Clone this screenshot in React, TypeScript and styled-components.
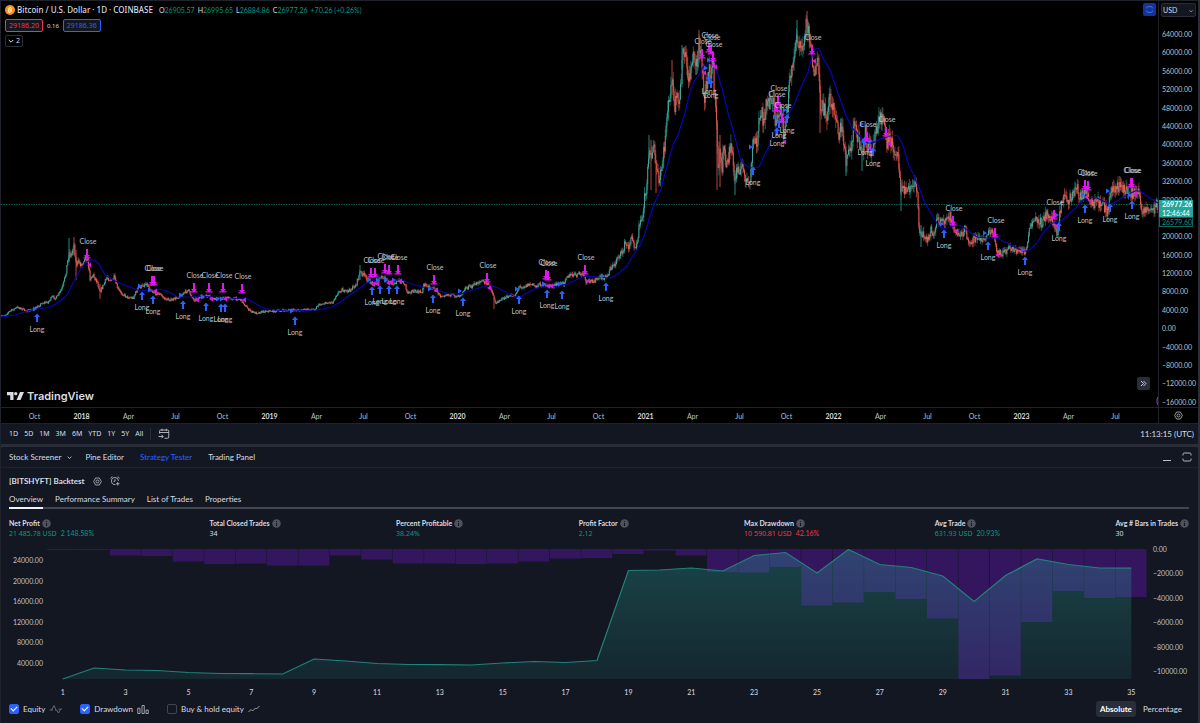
import React from "react";
import styled, { createGlobalStyle, css } from "styled-components";

const c = {
  page: "#131722",
  chart: "#000000",
  line: "#1e222d",
  divider: "#2a2e39",
  text: "#d9dce3",
  axis: "#bdc0c9",
  muted: "#787b86",
  up: "#089981",
  upSoft: "#26a69a",
  down: "#f23645",
  blue: "#2962ff",
  magenta: "#e015f0",
};
const wide = `"Noto Sans", sans-serif`;

const GlobalStyle = createGlobalStyle`
  * { box-sizing: border-box; }
  body { margin: 0; background: ${c.divider}; color: ${c.text}; font: 8px/10px Lato, "Open Sans", sans-serif; }
  button, select, input { font: inherit; color: inherit; margin: 0; }
  button { background: none; border: 0; padding: 0; cursor: pointer; }
  svg { display: block; }
`;

const Page = styled.div`
  min-height: 100vh;
  display: flex;
  flex-direction: column;
  padding-right: 2px;
  border-left: 1px solid ${c.line};
`;

/* ---------- price chart ---------- */

const ChartPanel = styled.section`
  background: ${c.chart};
  border-top: 1px solid ${c.line};
`;
const ChartRow = styled.div`
  display: flex;
  border-bottom: 1px solid ${c.line};
`;
const Plot = styled.div`
  position: relative;
  flex: 1;
  min-width: 0;
  & > svg { width: 100%; height: auto; }
`;
const Legend = styled.div`
  position: absolute;
  top: 2px;
  left: 4px;
  display: flex;
  flex-direction: column;
  align-items: flex-start;
  gap: 3px;
  font-family: ${wide};
  font-size: 7px;
`;
const LegendRow = styled.div<{ $gap: number }>`
  display: flex;
  align-items: center;
  gap: ${(p) => p.$gap}px;
  height: 13px;
`;
const Title = styled.div`
  display: flex;
  align-items: center;
  gap: 2px;
  margin-right: 3px;
`;
const Symbol = styled.h1`
  margin: 0;
  font-size: 8px;
  line-height: 12px;
  font-weight: 500;
  white-space: nowrap;
`;
const Ohlc = styled.span`
  font: 7px/10px Lato, "Open Sans", sans-serif;
  white-space: nowrap;
  color: ${c.text};
  b { font-weight: 400; color: ${c.up}; }
`;
const Quote = styled.button<{ $tone: string }>`
  height: 13px;
  padding: 0 3px;
  border: 1px solid ${(p) => p.$tone};
  border-radius: 2px;
  background: ${c.page};
  color: ${(p) => p.$tone};
  line-height: 11px;
`;
const Spread = styled.span`
  font-size: 6px;
`;
const Collapse = styled.button`
  display: flex;
  align-items: center;
  gap: 2px;
  height: 12px;
  padding: 0 2px;
  border: 1px solid ${c.divider};
  border-radius: 2px;
`;
const SnapButton = styled.button`
  position: absolute;
  top: 2px;
  right: 2px;
  width: 13px;
  height: 13px;
  display: grid;
  place-items: center;
  border-radius: 2px;
  background: #12349c;
  color: #6f8ce8;
`;
const JumpButton = styled.button`
  position: absolute;
  right: 8px;
  bottom: 17px;
  width: 13px;
  height: 13px;
  display: grid;
  place-items: center;
  border-radius: 2px;
  background: ${c.divider};
`;
const Brand = styled.a`
  position: absolute;
  left: 6px;
  bottom: 4px;
  display: flex;
  align-items: center;
  gap: 3px;
  color: ${c.text};
  font: 600 11px/14px Inter, sans-serif;
  text-decoration: none;
`;
const PriceAxis = styled.div`
  position: relative;
  width: 40px;
  border-left: 1px solid ${c.line};
  padding: 28px 0 0 3px;
  display: flex;
  flex-direction: column;
  justify-content: space-between;
  color: ${c.axis};
  font-size: 7px;
`;
const Currency = styled.select`
  position: absolute;
  top: 2px;
  left: 2px;
  width: 35px;
  height: 14px;
  padding: 0 1px;
  appearance: none;
  border: 1px solid ${c.divider};
  border-radius: 2px;
  background: ${c.page};
  color: ${c.text};
`;
const CurrencyArrow = styled.svg`
  position: absolute;
  top: 8px;
  right: 5px;
  pointer-events: none;
`;
const LastPrice = styled.div`
  position: absolute;
  top: 199px;
  left: 0;
  width: 34px;
  padding-left: 3px;
  background: ${c.upSoft};
  color: #fff;
  line-height: 8px;
  b { display: block; line-height: 9px; }
`;
const AskPrice = styled.div`
  position: absolute;
  top: 216px;
  left: 0;
  width: 34px;
  padding-left: 2px;
  border: 1px solid #12665c;
  background: ${c.chart};
  color: ${c.up};
  line-height: 8px;
`;
const TimeRow = styled.div`
  display: flex;
  height: 15px;
  align-items: stretch;
`;
const TimeAxis = styled.div`
  flex: 1;
  display: grid;
  grid-template-columns: repeat(24, 1fr);
  align-items: center;
  padding: 0 19px 0 10px;
  text-align: center;
  font-size: 7px;
  color: ${c.axis};
`;
const Tick = styled.span<{ $year?: boolean }>`
  ${(p) => p.$year && css`font-weight: 700; color: ${c.text};`}
`;
const AxisSettings = styled.button`
  width: 40px;
  display: grid;
  place-items: center;
  border-left: 1px solid ${c.line};
  color: ${c.axis};
`;

/* ---------- range bar ---------- */

const RangeBar = styled.nav`
  display: flex;
  align-items: center;
  height: 21px;
  padding: 0 4px 0 8px;
  background: ${c.page};
  border-top: 1px solid ${c.line};
`;
const Ranges = styled.div`
  display: flex;
  gap: 6px;
  padding-right: 7px;
  margin-right: 7px;
  border-right: 1px solid ${c.divider};
  font-family: ${wide};
  font-size: 7px;
  line-height: 12px;
`;
const Clock = styled.button`
  margin-left: auto;
`;

/* ---------- strategy tester ---------- */

const Tester = styled.section`
  flex: 1;
  margin-top: 3px;
  background: ${c.page};
  border-radius: 2px 2px 0 0;
`;
const PanelTabs = styled.div`
  display: flex;
  align-items: center;
  height: 21px;
  padding: 0 6px 0 8px;
  border-bottom: 1px solid ${c.line};
`;
const PanelTab = styled.button<{ $active?: boolean; $gap: number }>`
  display: flex;
  align-items: center;
  gap: 6px;
  margin-right: ${(p) => p.$gap}px;
  color: ${(p) => (p.$active ? c.blue : c.text)};
`;
const WindowButtons = styled.div`
  display: flex;
  gap: 10px;
  margin-left: auto;
  color: ${c.axis};
`;
const StrategyRow = styled.div`
  display: flex;
  align-items: center;
  gap: 8px;
  height: 24px;
  padding: 2px 8px 0;
  color: ${c.axis};
`;
const StrategyName = styled.h2`
  margin: 0;
  font-size: 8px;
  font-weight: 700;
  color: ${c.text};
`;
const ReportTabs = styled.div`
  display: flex;
  gap: 12px;
  height: 17px;
  margin: 0 9px 0 8px;
  border-bottom: 2px solid #434651;
`;
const ReportTab = styled.button<{ $active?: boolean }>`
  height: 17px;
  padding-bottom: 2px;
  border-bottom: 2px solid ${(p) => (p.$active ? "#f0f3fa" : "transparent")};
`;
const Metrics = styled.dl`
  display: flex;
  justify-content: space-between;
  margin: 0;
  padding: 9px 9px 10px 8px;
`;
const MetricName = styled.dt`
  display: flex;
  align-items: center;
  gap: 2px;
  font-size: 7px;
  font-weight: 700;
`;
const MetricValue = styled.dd<{ $tone?: string }>`
  margin: 0;
  font: 7px/11px ${wide};
  color: ${(p) => p.$tone ?? c.text};
  small { font: 7px/11px Lato, sans-serif; margin-left: 4px; }
`;
const Report = styled.div`
  display: flex;
  font-size: 7px;
  color: ${c.axis};
`;
const EquityAxis = styled.div`
  width: 46px;
  padding: 6px 4px 12px 0;
  display: flex;
  flex-direction: column;
  justify-content: space-between;
  text-align: right;
`;
const ReportPlot = styled.div`
  flex: 1;
  min-width: 0;
  & > svg { width: 100%; height: auto; }
`;
const DrawdownAxis = styled.div`
  width: 51px;
  margin: -5px 0 4px;
  padding-left: 6px;
  display: flex;
  flex-direction: column;
  justify-content: space-between;
`;
const TradeAxis = styled.div`
  display: grid;
  grid-template-columns: repeat(35, 1fr);
  padding: 7px 51px 0 46px;
  text-align: center;
  font-size: 7px;
`;
const Footer = styled.div`
  display: flex;
  align-items: center;
  height: 24px;
  padding: 0 12px 0 8px;
`;
const Toggle = styled.label`
  display: flex;
  align-items: center;
  gap: 4px;
  margin-right: 18px;
  color: ${c.text};
`;
const Box = styled.input`
  appearance: none;
  width: 10px;
  height: 10px;
  border: 1px solid #434651;
  border-radius: 2px;
  display: grid;
  place-items: center;
  &:checked { background: ${c.blue}; border-color: ${c.blue}; }
  &:checked::after {
    content: "";
    width: 5px;
    height: 3px;
    border-left: 1px solid #fff;
    border-bottom: 1px solid #fff;
    transform: translateY(-1px) rotate(-45deg);
  }
`;
const Units = styled.div`
  display: flex;
  gap: 3px;
  margin-left: auto;
`;
const Unit = styled.button<{ $active?: boolean }>`
  height: 16px;
  padding: 0 4px;
  border-radius: 3px;
  ${(p) => p.$active && css`background: ${c.divider}; color: #fff; font-weight: 700;`}
`;

/* ---------- data ---------- */

type P = [number, number];
const pts = (s: string): P[] => s.trim().split(/\s+/).map((t) => t.split(",").map(Number) as P);

const PRICE = pts(`
0,317 5,315 10,311 18,307 22,309 27,311 31,310 36,308 42,303 48,302 52,297 56,298 60,292 63,286 66,272 69,252 71,256 74,244
76,264 79,262 82,265 85,255 88,262 90,278 93,275 97,281 100,291 104,284 107,277 112,281 114,277 117,287 120,292 127,297 133,298
138,288 142,286 146,283 151,290 155,293 160,294 165,299 172,300 180,296 188,290 194,300 200,297 208,296 212,299 225,298 240,299
245,305 250,311 256,313 265,311 275,311 292,310 300,310 315,309 318,305 325,303 333,302 336,295 342,289 345,292 350,290 356,285
360,272 363,274 368,280 372,283 376,284 381,277 385,279 390,283 396,282 402,281 405,284 407,292 412,291 418,292 422,292 424,284
430,287 436,290 440,296 447,294 455,296 460,295 465,288 472,286 478,282 482,281 486,283 491,288 494,298 496,304 499,300 504,298
510,296 515,295 519,287 525,286 530,284 536,286 542,284 545,286 552,286 560,284 564,283 566,276 573,275 580,274 583,274 586,282
595,280 600,278 605,277 607,277 610,268 615,265 617,257 622,253 625,243 628,248 631,238 635,246 638,238 639,220 642,222 644,200
647,187 649,143 652,157 654,147 657,173 659,183 662,167 665,143 667,110 670,103 672,72 674,108 677,100 679,107 682,67 683,50
685,57 687,67 689,83 692,60 694,55 697,63 699,43 701,60 703,77 704,103 707,80 709,63 711,73 713,60 715,103 717,133 718,167
720,153 722,167 724,150 727,167 729,153 731,143 733,163 735,182 737,167 739,167 742,170 745,173 747,182 750,188 752,153 754,137
757,150 759,120 762,113 763,120 766,103 769,107 772,97 774,97 775,123 778,123 780,113 783,123 784,133 786,123 788,103 790,77
793,67 795,43 797,33 799,50 802,47 804,43 806,27 807,20 809,33 811,47 813,67 816,73 818,63 820,103 823,110 827,113 830,95
833,110 835,108 838,132 842,130 844,140 846,163 848,155 851,150 853,133 855,123 857,133 860,147 863,157 865,133 868,147 871,150
873,140 877,127 879,112 882,117 885,133 887,143 890,137 893,147 897,151 899,167 901,193 903,187 907,192 910,185 913,187 917,187
918,203 919,227 922,237 924,233 928,240 931,230 933,235 937,220 941,222 944,223 947,218 950,215 953,225 955,232 960,237 963,233
965,227 967,240 972,240 977,238 983,240 988,233 993,232 995,243 997,253 1003,253 1007,250 1013,248 1018,252 1025,251 1027,247
1029,233 1032,223 1037,220 1042,223 1044,217 1047,215 1051,217 1053,223 1057,233 1059,217 1062,200 1065,198 1068,200 1072,197
1075,188 1078,190 1080,198 1083,193 1086,193 1089,203 1093,206 1098,202 1103,205 1107,212 1109,205 1111,188 1115,190 1118,187
1122,185 1123,190 1128,192 1133,193 1138,192 1140,202 1141,208 1146,209 1153,210 1156,205 1158,204`);

const AVERAGE = pts(`
0,317 15,315 27,311 37,309 45,308 52,306 60,301 67,295 73,283 80,270 85,263 90,260 94,260 99,264 105,275 113,280 122,284 130,287
140,291 150,290 158,289 167,291 178,297 190,297 200,296 212,297 228,299 245,298 253,302 263,308 273,310 290,311 317,310 332,307
340,302 350,295 360,288 370,281 378,279 388,280 402,280 412,284 422,287 430,288 440,291 450,294 461,294 470,291 482,287 490,285
498,288 507,293 516,297 522,296 530,291 540,287 553,287 567,284 578,279 586,276 597,277 610,278 618,274 627,266 632,257 640,245
645,233 650,216 655,202 661,189 666,170 673,145 678,135 685,113 690,92 695,80 700,73 703,67 709,63 714,65 717,72 722,88 728,113
733,130 740,157 744,164 750,168 759,167 763,158 768,148 774,132 780,120 785,115 790,112 795,103 799,92 803,83 808,72 813,53
816,49 819,48 824,60 830,70 837,90 845,113 852,128 858,134 863,140 868,143 873,143 880,139 887,137 893,135 898,136 903,145
908,163 915,178 920,190 925,203 932,215 938,225 943,229 950,227 957,225 963,227 970,232 977,237 987,238 997,238 1007,243
1017,248 1023,251 1028,251 1037,243 1043,233 1052,223 1060,222 1070,213 1077,207 1083,200 1090,197 1097,198 1105,202 1112,204
1120,199 1127,195 1135,191 1140,191 1150,198 1158,203`);

const SPIKES: [number, number, number, boolean][] = [
  [69, 238, 262, true], [74, 237, 255, false], [76, 250, 280, false], [100, 284, 299, false], [360, 265, 280, true], [494, 298, 309, false],
  [649, 135, 160, true], [651, 140, 190, false], [656, 160, 193, false], [672, 60, 95, false], [682, 45, 70, true], [699, 30, 60, false],
  [717, 120, 190, false], [720, 135, 187, false], [735, 170, 195, true], [797, 20, 40, true], [807, 11, 30, false], [820, 80, 133, false],
  [846, 150, 176, true], [862, 145, 171, true], [901, 180, 211, true], [921, 225, 247, true], [1057, 225, 237, true],
];

const LONGS = pts(`37,318 142,296 153,300 183,305 206,307 221,308 225,308 295,321 372,291 380,290 389,290 397,290 433,299 463,302 519,300
547,294 562,295 606,287 709,80 711,84 753,171 777,132 779,124 787,119 865,141 873,152 944,234 988,246 1025,261 1059,227 1085,209 1110,208 1132,205`);
const CLOSES = pts(`87,254 152,281 154,281 194,288 209,288 223,288 242,289 371,273 375,273 385,269 389,270 398,270 434,280 487,278 546,275 548,276
585,270 702,54 709,48 711,50 713,57 778,101 776,107 782,118 812,50 867,137 886,132 953,221 995,233 1054,215 1085,185 1088,186 1131,183 1132,183`);
const ENTRIES = pts(`35,309 140,286 150,290 181,295 203,297 218,299 222,299 292,311 369,280 378,280 386,280 394,280 430,289 460,291 517,289 544,284
560,284 603,276 706,68 709,60 751,147 775,117 785,110 862,124 864,141 871,141 942,224 985,233 1023,250 1057,215 1083,195 1108,191 1130,195`);
const EXITS = pts(`89,265 155,291 197,300 211,299 225,299 244,300 373,284 377,284 388,283 391,282 400,281 436,290 489,288 548,286 551,286 588,281
704,73 713,65 715,67 776,110 780,111 784,142 814,61 869,148 889,144 956,231 997,255 1056,226 1086,197 1090,201 1135,194`);

const at = (series: P[], x: number) => {
  let i = 1;
  while (i < series.length - 1 && series[i][0] < x) i++;
  const [x0, y0] = series[i - 1];
  const [x1, y1] = series[i];
  return y0 + ((y1 - y0) * (x - x0)) / (x1 - x0);
};

const buildCandles = () => {
  let seed = 7;
  const rnd = () => (seed = (seed * 16807) % 2147483647) / 2147483647;
  const out = { upWick: "", downWick: "", upBody: "", downBody: "" };
  let open = 317;
  for (let x = 0.5; x < 1158; x += 0.8) {
    const base = at(PRICE, x);
    const amp = Math.min(10, Math.max(1.2, (328 - base) * 0.05));
    const close = base + (rnd() - 0.5) * amp * 1.7;
    const hi = Math.min(open, close) - rnd() * amp;
    const lo = Math.max(open, close) + rnd() * amp;
    const up = close < open;
    const wick = `M${x.toFixed(1)} ${hi.toFixed(1)}V${lo.toFixed(1)}`;
    const body = `M${x.toFixed(1)} ${Math.min(open, close).toFixed(1)}V${(Math.max(open, close) + 0.5).toFixed(1)}`;
    if (up) { out.upWick += wick; out.upBody += body; } else { out.downWick += wick; out.downBody += body; }
    open = close;
  }
  return out;
};
const CANDLES = buildCandles();

const PRICE_TICKS = Array.from({ length: 21 }, (_, i) => 64000 - i * 4000);
const QUARTERS = ["Apr", "Jul", "Oct"];
const TIME_TICKS = ["Oct", ...[2018, 2019, 2020, 2021, 2022].flatMap((y) => [String(y), ...QUARTERS]), "2023", "Apr", "Jul"];
const RANGES = ["1D", "5D", "1M", "3M", "6M", "YTD", "1Y", "5Y", "All"];
const METRICS = [
  { name: "Net Profit", value: "21 485.78 USD", pct: "2 148.58%", tone: c.up },
  { name: "Total Closed Trades", value: "34" },
  { name: "Percent Profitable", value: "38.24%", tone: c.up },
  { name: "Profit Factor", value: "2.12", tone: c.up },
  { name: "Max Drawdown", value: "10 590.81 USD", pct: "42.16%", tone: c.down },
  { name: "Avg Trade", value: "631.93 USD", pct: "20.93%", tone: c.up },
  { name: "Avg # Bars in Trades", value: "30" },
];
const EQUITY = [130, 119, 121, 121.5, 123.5, 124.5, 124.7, 125, 110, 112, 114.5, 115.5, 115.7, 116, 114, 112.5, 113.5, 111.5, 21.5, 21,
  19, 22, 6.5, 3.5, 24, 0.5, 15.5, 18.5, 27, 52.5, 26.5, 10, 15.5, 19, 19.2];
const DRAWDOWN = [1, 1, 6.5, 7, 12.5, 15, 14.7, 16.5, 16.5, 6.5, 10.5, 14.5, 14.5, 15, 14.5, 12.5, 9.5, 9, 5, 1.5, 6.5, 23, 23.5, 18,
  56.5, 53.5, 43, 50, 69.5, 130, 126.5, 73, 42, 49, 48];
const STEP = 1100 / 35;

const num = (n: number) => `${n < 0 ? "−" : ""}${Math.abs(n)}.00`;
const linePath = (p: P[]) => p.map(([x, y], i) => `${i ? "L" : "M"}${x} ${y}`).join("");

/* ---------- icons ---------- */

const Chevron = ({ size = 5 }: { size?: number }) => (
  <svg width={size} height={size} viewBox="0 0 6 6" fill="none" stroke="currentColor"><path d="M.8 2 3 4.2 5.2 2" /></svg>
);
const Hexagon = ({ size = 9 }: { size?: number }) => (
  <svg width={size} height={size} viewBox="0 0 18 18" fill="none" stroke="currentColor" strokeWidth="1.6">
    <path d="M5.2 2h7.6l3.9 7-3.9 7H5.2L1.3 9z" /><circle cx="9" cy="9" r="3" />
  </svg>
);
const Alarm = () => (
  <svg width="10" height="10" viewBox="0 0 20 20" fill="none" stroke="currentColor" strokeWidth="1.7">
    <path d="M17 10A7 7 0 1 0 11 17M1.500 5Q2 2 5 1.500M15 1.500Q18 2 18.500 5M10 6.500V10.500H7M15.500 12v7M12 15.500h7" />
  </svg>
);
const Frame = ({ size = 10 }: { size?: number }) => (
  <svg width={size} height={size} viewBox="0 0 20 20" fill="none" stroke="currentColor" strokeWidth="1.9">
    <path d="M2 7V4.500Q2 2 4.500 2H15.500Q18 2 18 4.500V7M2 13v2.500Q2 18 4.500 18H15.500Q18 18 18 15.500V13" />
  </svg>
);
const Info = () => (
  <svg width="9" height="9" viewBox="0 0 18 18"><circle cx="9" cy="9" r="8.500" fill="#50535e" /><path d="M9 4v2.200M9 8v6" stroke={c.page} strokeWidth="2.200" /></svg>
);
const GoTo = () => (
  <svg width="12" height="12" viewBox="0 0 24 24" fill="none" stroke={c.axis} strokeWidth="1.800">
    <path d="M3 11V6.500Q3 4 5.500 4H19Q21.500 4 21.500 6.500V18Q21.500 20.500 19 20.500H13M3 9H21.500M8 1.500V6M16.500 1.500V6M1 17H10M7 13.500 10.500 17 7 20.500" />
  </svg>
);

const ArrowMark = ({ x, y, up }: { x: number; y: number; up?: boolean }) =>
  up ? (
    <path d={`M${x - 1} ${y + 4}V${y - 1}H${x - 3}L${x} ${y - 4.500}L${x + 3} ${y - 1}H${x + 1}V${y + 4}z`} fill={c.blue} />
  ) : (
    <path d={`M${x - 1} ${y - 5}V${y + 1}H${x - 3}L${x - 1} ${y + 3.200}H${x - 3.500}V${y + 4.500}H${x + 3.500}V${y + 3.200}H${x + 1}L${x + 3} ${y + 1}H${x + 1}V${y - 5}z`} fill={c.magenta} />
  );

const PriceChart = () => (
  <svg viewBox="0 0 1157 406" role="img" aria-label="Bitcoin price with strategy entries and exits">
    <path d="M0 203.500H1157" stroke="#0f5a50" strokeDasharray="1.500 1" />
    <g transform="translate(-1 -1)" fill="none">
      <g strokeWidth="0.700">
        <path d={CANDLES.upWick} stroke="#1c8a80" />
        <path d={CANDLES.downWick} stroke="#c24742" />
        <path d={CANDLES.upBody} stroke="#5cbcb0" />
        <path d={CANDLES.downBody} stroke="#ff6b62" />
      </g>
      {SPIKES.map(([x, a, b, up]) => (
        <path key={x} d={`M${x} ${a}V${b}`} stroke={up ? "#1c8a80" : "#b5443f"} />
      ))}
      <path d={linePath(AVERAGE)} stroke="#0606b4" strokeWidth="1.200" strokeLinejoin="round" />
      {ENTRIES.map(([x, y]) => <path key={`${x}-${y}`} d={`M${x - 2} ${y - 2.500}L${x + 2} ${y}L${x - 2} ${y + 2.500}z`} fill={c.blue} />)}
      {EXITS.map(([x, y]) => <path key={`${x}-${y}`} d={`M${x + 2} ${y - 2.500}L${x - 2} ${y}L${x + 2} ${y + 2.500}z`} fill={c.magenta} />)}
      {LONGS.map(([x, y]) => <ArrowMark key={`${x}-${y}`} x={x} y={y} up />)}
      {CLOSES.map(([x, y]) => <ArrowMark key={`${x}-${y}`} x={x} y={y} />)}
      <g fill={c.axis} fontSize="7" textAnchor="middle">
        {LONGS.map(([x, y]) => <text key={`${x}-${y}`} x={x} y={y + 14}>Long</text>)}
        {CLOSES.map(([x, y]) => <text key={`${x}-${y}`} x={x + 1} y={y - 10}>Close</text>)}
      </g>
      <path d="M1158 397q-2 4 0 8" stroke="#9c27b0" strokeWidth="1.200" />
    </g>
  </svg>
);

const EquityChart = () => {
  const line = EQUITY.map((y, i): P => [STEP * (i + 0.5), y]);
  return (
    <svg viewBox="0 0 1100 131" role="img" aria-label="Equity and drawdown by trade">
      <defs>
        <linearGradient id="equity" x1="0" y1="0" x2="0" y2="1">
          <stop offset="0" stopColor={c.upSoft} stopOpacity="0.320" />
          <stop offset="1" stopColor={c.upSoft} stopOpacity="0.110" />
        </linearGradient>
      </defs>
      {DRAWDOWN.map((h, i) => <rect key={i} x={STEP * i} width={STEP - 0.500} height={h} fill="#34165e" />)}
      <path d={`${linePath(line)}V130H${STEP / 2}z`} fill="url(#equity)" />
      <path d={linePath(line)} fill="none" stroke="#1f8479" strokeWidth="1.200" />
    </svg>
  );
};

export default function App() {
  return (
    <Page>
      <GlobalStyle />
      <ChartPanel>
        <ChartRow>
          <Plot>
            <PriceChart />
            <Legend>
              <LegendRow $gap={3}>
                <Title>
                  <svg width="10" height="10" viewBox="0 0 20 20">
                    <circle cx="10" cy="10" r="10" fill="#f7931a" />
                    <path d="M8 5.500 6.500 14M8 6h3.500q2.500.300 2 2.200T11 10H7.500M11 10q2.500.300 2 2.300T10 14H6.500M10.500 4l-.300 2M9 14l-.300 2" fill="none" stroke="#fff" strokeWidth="1.600" />
                  </svg>
                  <Symbol>Bitcoin / U.S. Dollar · 1D · COINBASE</Symbol>
                </Title>
                <Ohlc>O<b>26905.57</b></Ohlc>
                <Ohlc>H<b>26995.65</b></Ohlc>
                <Ohlc>L<b>26884.86</b></Ohlc>
                <Ohlc>C<b>26977.26</b></Ohlc>
                <Ohlc><b>+70.26 (+0.26%)</b></Ohlc>
              </LegendRow>
              <LegendRow $gap={4}>
                <Quote $tone={c.down}>29186.20</Quote>
                <Spread>0.16</Spread>
                <Quote $tone={c.blue}>29186.36</Quote>
              </LegendRow>
              <Collapse aria-label="Show indicators"><Chevron size={6} />2</Collapse>
            </Legend>
            <SnapButton aria-label="Maximize chart"><Frame size={7} /></SnapButton>
            <JumpButton aria-label="Scroll to the most recent bar">
              <svg width="7" height="7" viewBox="0 0 14 14" fill="none" stroke={c.text} strokeWidth="1.800"><path d="M2 2l5 5-5 5M7 2l5 5-5 5" /></svg>
            </JumpButton>
            <Brand href="#">
              <svg width="17" height="8" viewBox="0 0 34 16" fill={c.text}><path d="M0 0h13v16H6.500V6.500H0z" /><circle cx="17.500" cy="3.300" r="3.300" /><path d="M26 0h8l-7 16h-8z" /></svg>
              TradingView
            </Brand>
          </Plot>
          <PriceAxis>
            {PRICE_TICKS.map((t) => <span key={t}>{num(t)}</span>)}
            <Currency aria-label="Currency"><option>USD</option></Currency>
            <CurrencyArrow width="4" height="4" viewBox="0 0 6 6" fill="none" stroke={c.text}><path d="M.8 2 3 4.200 5.200 2" /></CurrencyArrow>
            <LastPrice><b>26977.26</b>12:46:44</LastPrice>
            <AskPrice>26579.60</AskPrice>
          </PriceAxis>
        </ChartRow>
        <TimeRow>
          <TimeAxis>
            {TIME_TICKS.map((t, i) => <Tick key={i} $year={t.length === 4}>{t}</Tick>)}
          </TimeAxis>
          <AxisSettings aria-label="Axis settings"><Hexagon /></AxisSettings>
        </TimeRow>
      </ChartPanel>
      <RangeBar>
        <Ranges>{RANGES.map((r) => <button key={r}>{r}</button>)}</Ranges>
        <button aria-label="Go to date"><GoTo /></button>
        <Clock>11:13:15 (UTC)</Clock>
      </RangeBar>
      <Tester>
        <PanelTabs>
          <PanelTab $gap={13}>Stock Screener <Chevron /></PanelTab>
          <PanelTab $gap={16}>Pine Editor</PanelTab>
          <PanelTab $gap={16} $active>Strategy Tester</PanelTab>
          <PanelTab $gap={0}>Trading Panel</PanelTab>
          <WindowButtons>
            <button aria-label="Minimize panel"><svg width="9" height="10" viewBox="0 0 9 10"><path d="M0 8.500h8" stroke="currentColor" /></svg></button>
            <button aria-label="Maximize panel"><Frame /></button>
          </WindowButtons>
        </PanelTabs>
        <StrategyRow>
          <StrategyName>[BITSHYFT] Backtest</StrategyName>
          <button aria-label="Strategy settings"><Hexagon /></button>
          <button aria-label="Create alert"><Alarm /></button>
        </StrategyRow>
        <ReportTabs>
          <ReportTab $active>Overview</ReportTab>
          <ReportTab>Performance Summary</ReportTab>
          <ReportTab>List of Trades</ReportTab>
          <ReportTab>Properties</ReportTab>
        </ReportTabs>
        <Metrics>
          {METRICS.map((m) => (
            <div key={m.name}>
              <MetricName>{m.name}<Info /></MetricName>
              <MetricValue $tone={m.tone}>{m.value}{m.pct && <small>{m.pct}</small>}</MetricValue>
            </div>
          ))}
        </Metrics>
        <Report>
          <EquityAxis>{[24000, 20000, 16000, 12000, 8000, 4000].map((t) => <span key={t}>{num(t)}</span>)}</EquityAxis>
          <ReportPlot><EquityChart /></ReportPlot>
          <DrawdownAxis>{[0, -2000, -4000, -6000, -8000, -10000].map((t) => <span key={t}>{num(t)}</span>)}</DrawdownAxis>
        </Report>
        <TradeAxis>{EQUITY.map((_, i) => <span key={i}>{i % 2 === 0 ? i + 1 : ""}</span>)}</TradeAxis>
        <Footer>
          <Toggle>
            <Box type="checkbox" defaultChecked />Equity
            <svg width="13" height="10" viewBox="0 0 26 20" fill="none" stroke={c.muted} strokeWidth="1.600"><path d="M1 12h4L10 3l4 9M12 12h3l4 6 4-8h3M5 12h3M19 10h3" /></svg>
          </Toggle>
          <Toggle>
            <Box type="checkbox" defaultChecked />Drawdown
            <svg width="12" height="9" viewBox="0 0 24 18" fill="none" stroke={c.axis} strokeWidth="1.600"><path d="M1.500 6.500h4.500v10.500H1.500zM10 1h4.500v16H10zM18 10h4.500v7H18z" /></svg>
          </Toggle>
          <Toggle>
            <Box type="checkbox" />Buy &amp; hold equity
            <svg width="12" height="8" viewBox="0 0 24 16" fill="none" stroke={c.axis} strokeWidth="1.600"><path d="M1 14l5-5 3 3 6-6 2 2 6-6" /></svg>
          </Toggle>
          <Units>
            <Unit $active>Absolute</Unit>
            <Unit>Percentage</Unit>
          </Units>
        </Footer>
      </Tester>
    </Page>
  );
}
